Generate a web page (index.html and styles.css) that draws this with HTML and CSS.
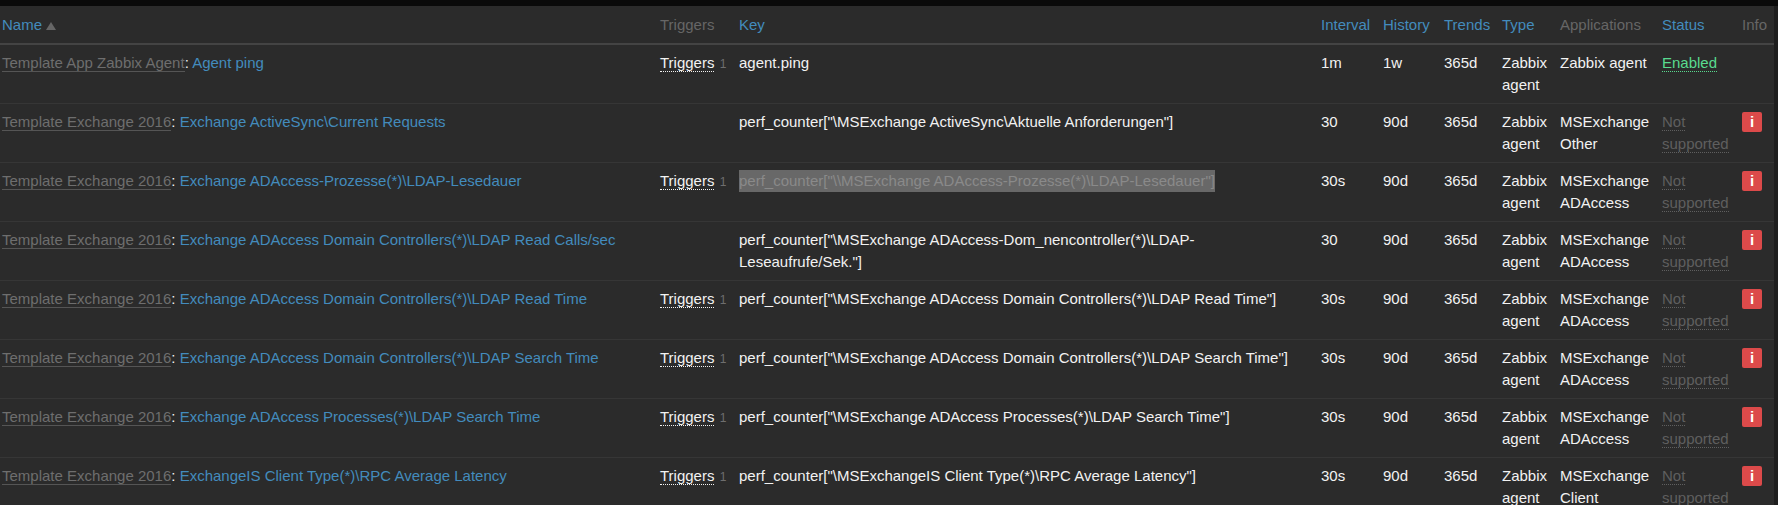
FILE: index.html
```html
<!DOCTYPE html>
<html lang="en">
<head>
<meta charset="utf-8">
<title>Items</title>
<link rel="stylesheet" href="styles.css">
</head>
<body>
<div class="topbar"></div>
<main class="wrap">
<table class="items">
<colgroup>
<col class="c-name"><col class="c-trig"><col class="c-key"><col class="c-int"><col class="c-hist"><col class="c-trend"><col class="c-type"><col class="c-app"><col class="c-status"><col class="c-info">
</colgroup>
<thead>
<tr>
<th><a class="lnk">Name</a> <span class="arrow"></span></th>
<th class="mute">Triggers</th>
<th><a class="lnk">Key</a></th>
<th><a class="lnk">Interval</a></th>
<th><a class="lnk">History</a></th>
<th><a class="lnk">Trends</a></th>
<th><a class="lnk">Type</a></th>
<th class="mute">Applications</th>
<th><a class="lnk">Status</a></th>
<th class="mute">Info</th>
</tr>
</thead>
<tbody>
<tr>
<td><a class="tpl">Template App Zabbix Agent</a>: <a class="lnk">Agent ping</a></td>
<td><a class="trg">Triggers</a> <sup class="cnt">1</sup></td>
<td>agent.ping</td>
<td>1m</td><td>1w</td><td>365d</td><td>Zabbix agent</td><td>Zabbix agent</td>
<td><a class="st-on">Enabled</a></td>
<td></td>
</tr>
<tr>
<td><a class="tpl">Template Exchange 2016</a>: <a class="lnk">Exchange ActiveSync\Current Requests</a></td>
<td></td>
<td>perf_counter["\MSExchange ActiveSync\Aktuelle Anforderungen"]</td>
<td>30</td><td>90d</td><td>365d</td><td>Zabbix agent</td><td>MSExchange Other</td>
<td><a class="st-off">Not supported</a></td>
<td><span class="info">i</span></td>
</tr>
<tr>
<td><a class="tpl">Template Exchange 2016</a>: <a class="lnk">Exchange ADAccess-Prozesse(*)\LDAP-Lesedauer</a></td>
<td><a class="trg">Triggers</a> <sup class="cnt">1</sup></td>
<td><span class="sel">perf_counter["\\MSExchange ADAccess-Prozesse(*)\LDAP-Lesedauer"]</span></td>
<td>30s</td><td>90d</td><td>365d</td><td>Zabbix agent</td><td>MSExchange ADAccess</td>
<td><a class="st-off">Not supported</a></td>
<td><span class="info">i</span></td>
</tr>
<tr>
<td><a class="tpl">Template Exchange 2016</a>: <a class="lnk">Exchange ADAccess Domain Controllers(*)\LDAP Read Calls/sec</a></td>
<td></td>
<td>perf_counter["\MSExchange ADAccess-Dom_nencontroller(*)\LDAP-Leseaufrufe/Sek."]</td>
<td>30</td><td>90d</td><td>365d</td><td>Zabbix agent</td><td>MSExchange ADAccess</td>
<td><a class="st-off">Not supported</a></td>
<td><span class="info">i</span></td>
</tr>
<tr>
<td><a class="tpl">Template Exchange 2016</a>: <a class="lnk">Exchange ADAccess Domain Controllers(*)\LDAP Read Time</a></td>
<td><a class="trg">Triggers</a> <sup class="cnt">1</sup></td>
<td>perf_counter["\MSExchange ADAccess Domain Controllers(*)\LDAP Read Time"]</td>
<td>30s</td><td>90d</td><td>365d</td><td>Zabbix agent</td><td>MSExchange ADAccess</td>
<td><a class="st-off">Not supported</a></td>
<td><span class="info">i</span></td>
</tr>
<tr>
<td><a class="tpl">Template Exchange 2016</a>: <a class="lnk">Exchange ADAccess Domain Controllers(*)\LDAP Search Time</a></td>
<td><a class="trg">Triggers</a> <sup class="cnt">1</sup></td>
<td>perf_counter["\MSExchange ADAccess Domain Controllers(*)\LDAP Search Time"]</td>
<td>30s</td><td>90d</td><td>365d</td><td>Zabbix agent</td><td>MSExchange ADAccess</td>
<td><a class="st-off">Not supported</a></td>
<td><span class="info">i</span></td>
</tr>
<tr>
<td><a class="tpl">Template Exchange 2016</a>: <a class="lnk">Exchange ADAccess Processes(*)\LDAP Search Time</a></td>
<td><a class="trg">Triggers</a> <sup class="cnt">1</sup></td>
<td>perf_counter["\MSExchange ADAccess Processes(*)\LDAP Search Time"]</td>
<td>30s</td><td>90d</td><td>365d</td><td>Zabbix agent</td><td>MSExchange ADAccess</td>
<td><a class="st-off">Not supported</a></td>
<td><span class="info">i</span></td>
</tr>
<tr>
<td><a class="tpl">Template Exchange 2016</a>: <a class="lnk">ExchangeIS Client Type(*)\RPC Average Latency</a></td>
<td><a class="trg">Triggers</a> <sup class="cnt">1</sup></td>
<td>perf_counter["\MSExchangeIS Client Type(*)\RPC Average Latency"]</td>
<td>30s</td><td>90d</td><td>365d</td><td>Zabbix agent</td><td>MSExchange Client</td>
<td><a class="st-off">Not supported</a></td>
<td><span class="info">i</span></td>
</tr>
</tbody>
</table>
</main>
</body>
</html>
```
FILE: styles.css
```css
html, body {
  margin: 0;
  height: 505px;
  overflow: hidden;
  background: #1e1e1e;
}
body {
  font-family: "Liberation Sans", Arial, sans-serif;
  font-size: 15px;
  line-height: 22px;
  color: #f2f2f2;
}
.topbar { height: 6px; background: #0a0a0a; }
.wrap { width: 1774px; height: 499px; background: #2b2b2b; }
.items { width: 1774px; table-layout: fixed; border-collapse: collapse; }
.c-name { width: 658px; }
.c-trig { width: 79px; }
.c-key { width: 582px; }
.c-int { width: 62px; }
.c-hist { width: 61px; }
.c-trend { width: 58px; }
.c-type { width: 58px; }
.c-app { width: 102px; }
.c-status { width: 80px; }
.c-info { width: 34px; }
th, td { text-align: left; vertical-align: top; padding: 7px 2px; }
th { font-weight: normal; padding: 8px 2px 7px; border-bottom: 2px solid #444; }
td { border-bottom: 1px solid #363636; height: 44px; }
.lnk { color: #438bbd; }
.mute { color: #666; }
.arrow {
  display: inline-block;
  width: 0; height: 0;
  border-left: 5px solid transparent;
  border-right: 5px solid transparent;
  border-bottom: 8px solid #666;
}
.tpl { color: #6e6e6e; border-bottom: 1px solid #555; }
.trg { color: #f2f2f2; border-bottom: 1px dotted #f2f2f2; }
.cnt { color: #6e6e6e; font-size: 12px; line-height: 0; vertical-align: baseline; margin-left: 1px; }
.sel { background: #686868; color: #8a8a8a; display: inline-block; }
.st-on { color: #59db8f; border-bottom: 1px dotted #59db8f; }
.st-off { color: #5f5f5f; border-bottom: 1px dotted #5f5f5f; }
.info {
  display: block;
  width: 20px; height: 20px;
  margin-top: 1px;
  border-radius: 2px;
  background: #dc4a4a;
  color: #fff;
  font-weight: bold;
  font-size: 15px;
  line-height: 20px;
  text-align: center;
}
```
